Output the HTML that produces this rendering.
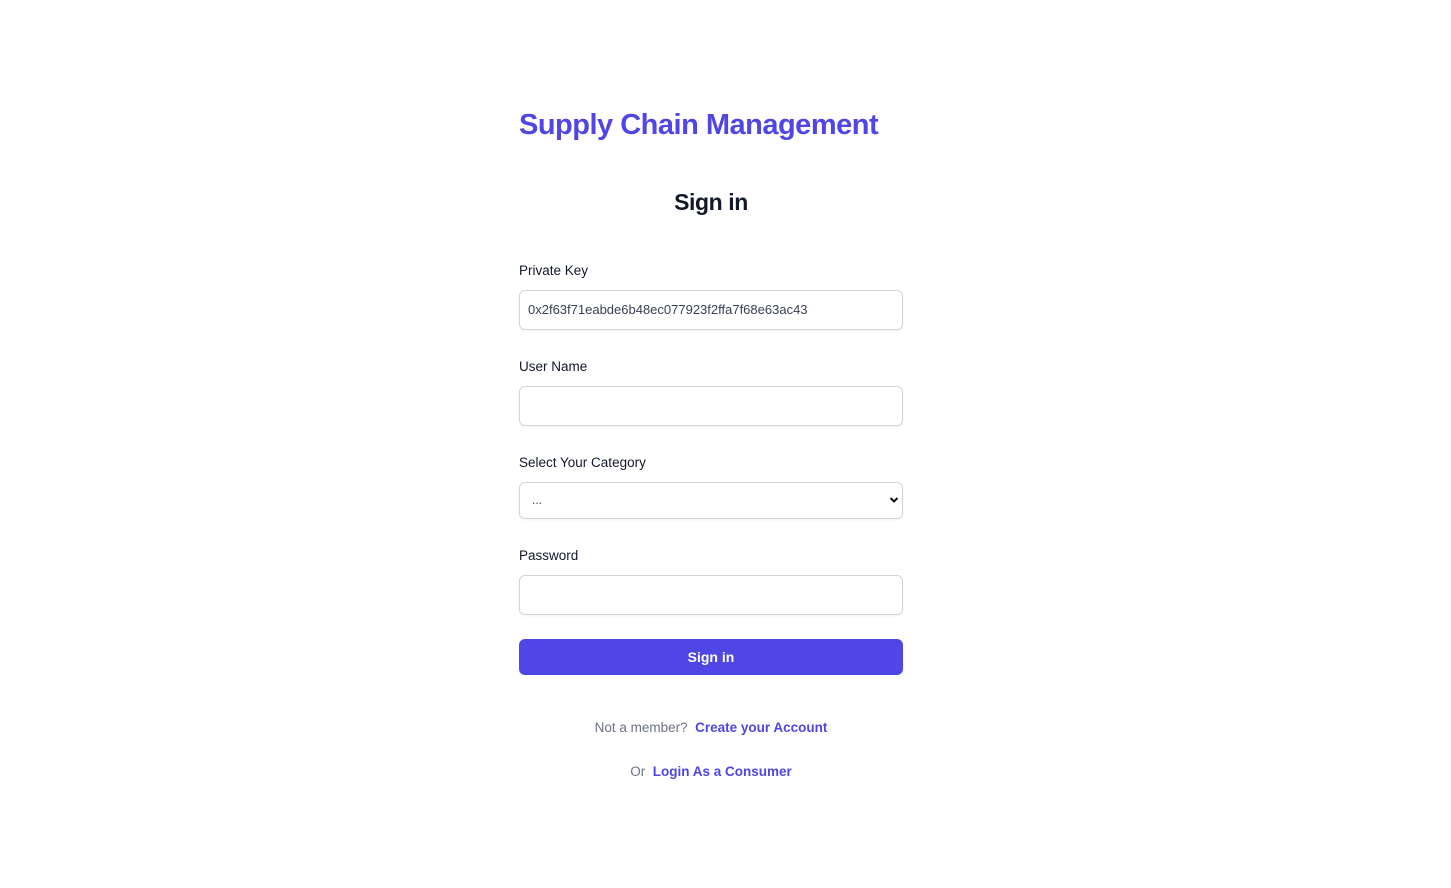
<!DOCTYPE html>
<html><head><meta charset="utf-8"><style>
*{box-sizing:border-box;margin:0;padding:0}
body{width:1451px;height:888px;background:#fff;font-family:"Liberation Sans",sans-serif;color:#111827;position:relative}
.a{position:absolute}
.title{left:519px;top:109px;font-size:29px;font-weight:bold;color:#4f46e5;letter-spacing:-0.5px;white-space:nowrap}
.h2{left:0;width:1422px;text-align:center;top:189px;font-size:23px;font-weight:bold;color:#111827;letter-spacing:-0.4px}
.lbl{left:519px;font-size:13.5px;color:#111827}
.inp{left:519px;width:384px;height:40px;border:1px solid #d1d5db;border-radius:6px;box-shadow:0 1px 2px rgba(0,0,0,.06)}
.btn{left:519px;top:639px;width:384px;height:36px;background:#4f46e5;border-radius:6px;color:#fff;font-weight:bold;font-size:14px;text-align:center;line-height:36px}
.foot{left:0;width:1422px;text-align:center;font-size:13.5px;color:#6b7280}
.foot b{color:#4f46e5;font-weight:600}
</style></head><body>
<div class="a title">Supply Chain Management</div>
<div class="a h2">Sign in</div>
<div class="a lbl" style="top:263px">Private Key</div>
<div class="a inp" style="top:290px;font-size:13px;color:#374151;padding-left:8px;line-height:38px">0x2f63f71eabde6b48ec077923f2ffa7f68e63ac43</div>
<div class="a lbl" style="top:359px">User Name</div>
<div class="a inp" style="top:386px"></div>
<div class="a lbl" style="top:455px">Select Your Category</div>
<div class="a inp" style="top:482px;height:37px;font-size:12px;color:#374151;padding-left:12px;line-height:34px">...
<svg class="a" style="right:3px;top:13px" width="10" height="8" viewBox="0 0 10 8"><path d="M1.5 2 L5 5.5 L8.5 2" stroke="#111" stroke-width="2" fill="none"/></svg></div>
<div class="a lbl" style="top:548px">Password</div>
<div class="a inp" style="top:575px"></div>
<div class="a btn">Sign in</div>
<div class="a foot" style="top:720px">Not a member?&nbsp; <b>Create your Account</b></div>
<div class="a foot" style="top:764px">Or&nbsp; <b>Login As a Consumer</b></div>
</body></html>
